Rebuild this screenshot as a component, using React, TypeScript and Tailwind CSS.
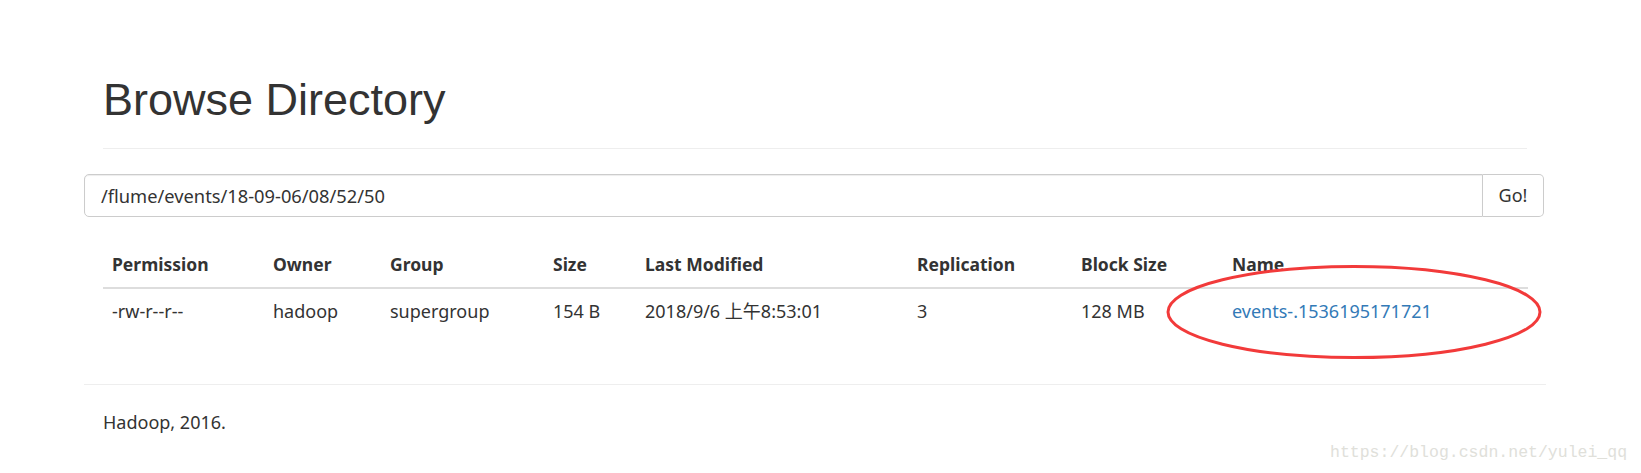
import React from 'react';

const headers = ['Permission', 'Owner', 'Group', 'Size', 'Last Modified', 'Replication', 'Block Size', 'Name'];
const widths = ['w-[161px]', 'w-[117px]', 'w-[163px]', 'w-[92px]', 'w-[272px]', 'w-[164px]', 'w-[151px]', 'w-[305px]'];

const row = ['-rw-r--r--', 'hadoop', 'supergroup', '154 B', '2018/9/6 上午8:53:01', '3', '128 MB'];

const App: React.FC = () => {
  return (
    <div className="relative w-[1641px] h-[473px] bg-white overflow-hidden text-[#333] font-['Noto_Sans','Noto_Sans_CJK_SC',sans-serif] text-[18px]">
      <div className="ml-[84px] w-[1462px]">
        <div className="mx-[19px] mt-[75px] pb-[11px] border-b border-[#eee]">
          <h1 className="font-['Liberation_Sans',Arial,sans-serif] text-[45px] leading-[49.5px] mb-[12.5px] font-normal">
            Browse Directory
          </h1>
        </div>

        <div className="mt-[25px] flex h-[43px] w-[1460px]">
          <div className="flex-1 flex items-center px-[16px] text-[18.3px] border border-[#ccc] rounded-l-[5px] shadow-[inset_0_1px_1px_rgba(0,0,0,0.075)]">
            /flume/events/18-09-06/08/52/50
          </div>
          <button className="w-[61px] border border-l-0 border-[#ccc] rounded-r-[5px] bg-white text-[#333]">
            Go!
          </button>
        </div>

        <div className="relative mx-[19px] mt-[25px]">
          <table className="w-full table-fixed border-collapse text-left">
            <thead>
              <tr className="border-b-[2.5px] border-[#ddd]">
                {headers.map((h, i) => (
                  <th key={h} className={`${widths[i]} pl-[9px] pr-[9px] py-[10px] leading-[25px] font-bold text-[17.5px]`}>
                    {h}
                  </th>
                ))}
              </tr>
            </thead>
            <tbody>
              <tr>
                {row.map((c, i) => (
                  <td key={i} className="pl-[9px] pr-[9px] py-[10px] leading-[25px]">
                    {c}
                  </td>
                ))}
                <td className="pl-[9px] pr-[9px] py-[10px] leading-[25px]">
                  <a className="text-[#337ab7]" href="#">events-.1536195171721</a>
                </td>
              </tr>
            </tbody>
          </table>
          <svg className="absolute left-[1062px] top-[22px]" width="378" height="97" viewBox="0 0 378 97">
            <ellipse cx="189" cy="48" rx="186" ry="45.5" fill="none" stroke="#f23a3a" strokeWidth="3" />
          </svg>
        </div>

        <hr className="mt-[50px] border-0 border-t border-[#eee]" />
        <p className="mx-[19px] mt-[25px] leading-[25px]">Hadoop, 2016.</p>
      </div>

      <div className="absolute left-[1330px] top-[441px] font-['Liberation_Mono',monospace] text-[16.5px] text-[#e0e0da]">
        https://blog.csdn.net/yulei_qq
      </div>
    </div>
  );
};

export default App;
